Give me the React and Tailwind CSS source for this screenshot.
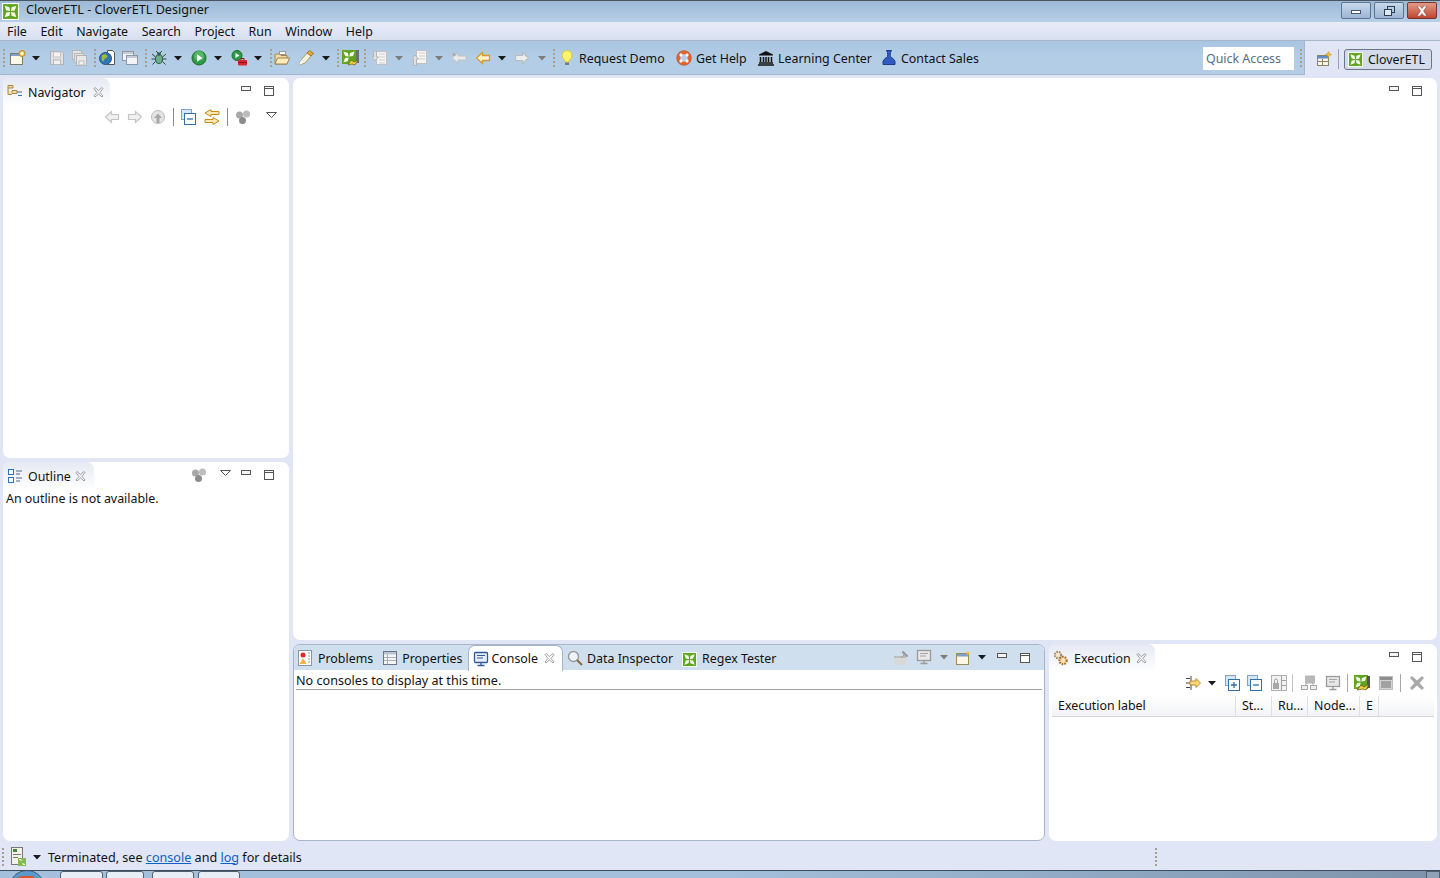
const Caret = ({ dark }) => (
  <svg width="8" height="5" viewBox="0 0 8 5" className="shrink-0"><path d="M0 0h8L4 4.5z" fill={dark ? '#1a1a1a' : '#7c7c7c'} /></svg>
)

const Grip = ({ count = 5 }) => (
  <div className="flex flex-col justify-center gap-[2px] w-[3px] shrink-0">
    {Array.from({ length: count }).map((_, i) => <div key={i} className="w-[2px] h-[2px] bg-[#a8a08c]" />)}
  </div>
)

const Clover = ({ size = 16 }) => (
  <svg width={size} height={size} viewBox="0 0 16 16" className="shrink-0">
    <rect width="16" height="16" fill="#fff" />
    <rect x="1" y="1" width="14" height="14" fill="#5fa51f" />
    <path d="M2.5 2.5L7 4l.6 3.600L4 7zM13.500 2.500L12 7l-3.600.6L9 4zM2.500 13.500L4 9l3.600-.6L7 12zM13.500 13.500L9 12l-.6-3.600L12 9z" fill="#f4f9ea" />
  </svg>
)

const S = ({ children }) => (
  <svg width="16" height="16" viewBox="0 0 16 16" fill="none" className="shrink-0">{children}</svg>
)

const icons = {
  newFile: <S><rect x="0.500" y="3.500" width="12" height="11" fill="#fdf8e6" stroke="#7c7a60" /><rect x="1" y="4" width="11" height="2" fill="#7f9fd0" /><circle cx="12" cy="3.500" r="3" fill="#f4d060" stroke="#b88a20" /><path d="M10.500 3.500h3M12 2v3" stroke="#fff" /></S>,
  save: <S><path d="M1.500 1.500h11l2 2v11h-13z" fill="#e0e0e0" stroke="#b0b0b0" /><rect x="4.500" y="2" width="7" height="5" fill="#f4f4f4" stroke="#c4c4c4" /><rect x="4.500" y="10" width="7" height="4.500" fill="#f0f0f0" stroke="#b8b8b8" /></S>,
  saveAll: <S><rect x="1.500" y="0.500" width="9" height="9" fill="#e4e4e4" stroke="#b8b8b8" /><rect x="3.500" y="3.500" width="9" height="9" fill="#e4e4e4" stroke="#b8b8b8" /><rect x="5.500" y="5.500" width="10" height="10" fill="#e8e8e8" stroke="#b4b4b4" /><rect x="8" y="11" width="5" height="4" fill="#f4f4f4" stroke="#bbb" /></S>,
  globe: <S><path d="M8.500 0.500h5l2 2v12h-7z" fill="#fff" stroke="#555" /><circle cx="6.500" cy="8.500" r="6" fill="#2f78b8" stroke="#24507c" /><path d="M3 5.500c2-2 4-1 5 0s-1 3-2 3-1 3-2 3-2-4-1-6z" fill="#a4b83a" /></S>,
  windows: <S><rect x="0.500" y="1.500" width="11" height="9" fill="#f2f4f8" stroke="#8d97a6" /><rect x="1" y="2" width="10" height="2" fill="#c4ccd8" /><rect x="4.500" y="5.500" width="11" height="9" fill="#f2f4f8" stroke="#8d97a6" /><rect x="5" y="6" width="10" height="2" fill="#c4ccd8" /></S>,
  bug: <S><ellipse cx="8" cy="9" rx="3.500" ry="4.500" fill="#6fae8c" stroke="#2e5a48" /><circle cx="8" cy="4" r="1.800" fill="#2e5a48" /><path d="M1 4l3.500 3M15 4l-3.500 3M0.500 9h4M15.500 9h-4M1.500 14.500l3-3M14.500 14.500l-3-3M5 1l2 2M11 1L9 3" stroke="#2e4a40" /></S>,
  run: <S><circle cx="8" cy="8" r="7" fill="#2d9a45" stroke="#1b6b2f" /><circle cx="8" cy="6" r="5" fill="#53b865" /><path d="M6 4.200l5.500 3.800-5.500 3.800z" fill="#fff" /></S>,
  ext: <S><circle cx="6" cy="5.500" r="5" fill="#2d9a45" stroke="#1b6b2f" /><path d="M4.500 3l4 2.500-4 2.500z" fill="#fff" /><rect x="7" y="10" width="9" height="5.500" rx="1" fill="#d8262c" /><path d="M10 10V8.500h3V10M7 12.500h9" stroke="#8c1216" /></S>,
  open: <S><path d="M1 4.500V14h12V5.500H7L6 4H1.500z" fill="#f4dca0" stroke="#a0824a" /><path d="M1 14l2.500-6h12L13 14z" fill="#fcecc0" stroke="#a0824a" /><rect x="5.500" y="1.500" width="6" height="3" fill="#fff" stroke="#9a9a9a" /></S>,
  pen: <S><path d="M1 15l2-5 7-8 4 3-7 8z" fill="#f8f2dc" stroke="#a89a70" /><path d="M9 3l2.500-2.500 4 3L13 6z" fill="#e4a83c" stroke="#a87820" /><path d="M1 15l2-5 3 2.500z" fill="#fff" /></S>,
  graph: <svg width="18" height="17" viewBox="0 0 18 17" className="shrink-0"><rect width="14" height="14" fill="#5fa51f" /><path d="M1.500 1.500L6 3l.6 3.600L3 6zM12.500 1.500L11 6l-3.600.6L8 3zM1.500 12.500L3 8l3.600-.6L6 11z" fill="#f4f9ea" /><rect x="14" y="0" width="3" height="13" fill="#6e6e6e" /><path d="M6 15l3-5 3 2 4-2-3 5-3-1z" fill="#f2d040" stroke="#6e5c10" strokeWidth=".7" /></svg>,
  imp: <S><rect x="4.500" y="1.500" width="10" height="13" fill="#f4f4f4" stroke="#c0c0c0" /><path d="M7 4h6M7 7h6M7 10h6M7 13h6" stroke="#cfcfcf" /><path d="M1.500 1h3v6h2L3 11-.5 7h2z" fill="#e0e0e0" stroke="#b4b4b4" /></S>,
  exp: <S><rect x="4.500" y="0.500" width="10" height="13" fill="#f4f4f4" stroke="#c0c0c0" /><path d="M7 3h6M7 6h6M7 9h6" stroke="#cfcfcf" /><path d="M1.500 15.500h3V9h2L3 5-.5 9h2z" fill="#e0e0e0" stroke="#b4b4b4" /></S>,
  backDim: <S><path d="M1 8l6-5v3h8v4H7v3z" fill="#e8eaea" stroke="#c0c4c4" /><circle cx="3" cy="4.500" r="1.500" fill="#aaa" /></S>,
  back: <S><path d="M1.500 8l6-5.500v3h7v5h-7v3z" fill="#fdf3cf" stroke="#d99a26" strokeWidth="1.300" /></S>,
  fwd: <S><path d="M14.500 8l-6-5.500v3h-7v5h7v3z" fill="#eceeee" stroke="#b8bcbc" strokeWidth="1.200" /></S>,
  bulb: <S><path d="M8 0.500a5 5 0 0 0-3 9c.7.6 1 1.500 1 2.500h4c0-1 .3-1.900 1-2.500a5 5 0 0 0-3-9z" fill="#fdf46c" stroke="#d8c840" /><rect x="6" y="12.500" width="4" height="2.500" fill="#7a7a7a" /></S>,
  ring: <S><circle cx="8" cy="8" r="5.500" stroke="#e8622c" strokeWidth="3.500" /><path d="M4 4l2 2M12 4l-2 2M4 12l2-2M12 12l-2-2" stroke="#fff" strokeWidth="2.500" /><circle cx="8" cy="8" r="7.400" stroke="#a05030" strokeWidth=".6" /></S>,
  bank: <S><path d="M8 1l7 3.500v1H1v-1z" fill="#111" /><path d="M2.500 7v5M5.500 7v5M8 7v5M10.500 7v5M13.500 7v5" stroke="#111" strokeWidth="1.500" /><path d="M1 13h14M0 15h16" stroke="#111" strokeWidth="1.500" /></S>,
  person: <S><path d="M5.500 0.500h5l-1 2c0 1.500-.5 3 0 4s4 2.500 4.500 5v3H2v-3c.5-2.500 4-4 4.500-5s0-2.500 0-4z" fill="#2f5cc0" stroke="#1b3a8a" /></S>,
  perspective: <S><rect x="1.500" y="4.500" width="11" height="10" fill="#f8f4e4" stroke="#8a8466" /><rect x="2" y="5" width="10" height="2.500" fill="#5f8fc8" /><path d="M6.500 7.500v7M1.500 10.500h11" stroke="#8a8466" /><path d="M12.500 0.500l1 2 2 1-2 1-1 2-1-2-2-1 2-1z" fill="#f4c430" stroke="#b08a20" strokeWidth=".5" /></S>,
  nav: <S><path d="M1 1.500h5v2.500H1zM1 4v6.500h4M5 6.500h5v3H5z" fill="#f4dca0" stroke="#a58a4a" /><path d="M10 8h5M11 11.500h4" stroke="#3b6aa8" /></S>,
  outline: <S><rect x="1.500" y="1.500" width="5" height="5" fill="#fff" stroke="#2f6fc0" /><rect x="1.500" y="9.500" width="5" height="5" fill="#fff" stroke="#2f6fc0" /><path d="M9 3h6M9 6h4M9 10h6M9 13h4" stroke="#4a6a90" /></S>,
  problems: <S><rect x="1.500" y="0.500" width="13" height="15" fill="#fff" stroke="#8a94a6" /><circle cx="6" cy="5" r="2.500" fill="#e02a20" /><path d="M6 8l3.500 6h-7z" fill="#f2b43c" /><path d="M11 3h2M11 6h2M11 9h2M11 12h2" stroke="#8a94a6" /></S>,
  props: <S><rect x="0.500" y="1.500" width="13" height="13" fill="#f6f6f4" stroke="#6c7488" /><rect x="1" y="2" width="12" height="2.500" fill="#b8c4d8" /><path d="M4.500 4.500v10M1 7.500h12M1 10.500h12" stroke="#a8aebc" /></S>,
  console: <S><rect x="1.500" y="1.500" width="13" height="10" rx="1" fill="#e8eef8" stroke="#2c5a96" strokeWidth="1.300" /><path d="M4 4.500h8M4 7h6" stroke="#2c5a96" /><path d="M4.500 14.500h7M8 12v2" stroke="#2c5a96" strokeWidth="1.300" /></S>,
  search: <S><circle cx="6.500" cy="6.500" r="5" fill="#eef4fa" stroke="#9a9a9a" strokeWidth="1.400" /><path d="M10 10l5 5" stroke="#8a6a3c" strokeWidth="2" /></S>,
  gear: <S><circle cx="5" cy="5" r="3.200" fill="#f2e8d0" stroke="#a08860" strokeWidth="2" strokeDasharray="1.600 1" /><circle cx="10" cy="10.500" r="3.600" fill="#fbe6b0" stroke="#a8702c" strokeWidth="2.200" strokeDasharray="1.600 1" /></S>,
  pin: <S><rect x="1" y="6" width="12" height="9" fill="#d8d8d8" /><rect x="1" y="6" width="12" height="2" fill="#bcbcbc" /><path d="M8 8l4-4M10 1l5 5-2 .5-3.500-3.500z" fill="#9c9c9c" stroke="#9c9c9c" /></S>,
  monitor: <S><rect x="1.500" y="1.500" width="13" height="10" fill="#e8e8e8" stroke="#9a9a9a" strokeWidth="1.300" /><path d="M4 4.500h8M4 7h6" stroke="#a4a4a4" /><path d="M4.500 14.500h7M8 12v2" stroke="#9a9a9a" strokeWidth="1.300" /></S>,
  newCons: <S><rect x="1.500" y="3.500" width="12" height="11" fill="#fdf8e6" stroke="#9a8a56" /><rect x="2" y="4" width="11" height="2.500" fill="#7f9fd0" /><path d="M13 0.500l.8 1.700 1.700.8-1.700.8-.8 1.700-.8-1.700-1.700-.8 1.700-.8z" fill="#f4c430" /></S>,
  pinSel: <S><path d="M1 3.500h4M1 12.500h4M1 8h8" stroke="#444" /><path d="M6 1v5M6 10v5" stroke="#444" /><path d="M5 6h6V3.500L15.500 8 11 12.500V10H5z" fill="#f8d880" stroke="#c08a20" /></S>,
  expand: <S><rect x="0.500" y="0.500" width="10" height="10" fill="#d8e6f4" stroke="#7ea2c8" /><rect x="3.500" y="4.500" width="11" height="11" fill="#fff" stroke="#2f6fa8" /><path d="M6 10h6M9 7v6" stroke="#2f6fa8" strokeWidth="1.300" /></S>,
  collapse: <S><rect x="0.500" y="0.500" width="10" height="10" fill="#d8e6f4" stroke="#7ea2c8" /><rect x="3.500" y="4.500" width="11" height="11" fill="#fff" stroke="#2f6fa8" /><path d="M6 10h6" stroke="#2f6fa8" strokeWidth="1.300" /></S>,
  lockGrid: <S><rect x="0.500" y="0.500" width="15" height="15" fill="#f2f2f2" stroke="#b0b0b0" /><path d="M10.500 1v14M11 5.500h4M11 10.500h4" stroke="#a0a0a0" /><rect x="2" y="8" width="6" height="6" fill="#a8a8a8" /><path d="M3.500 8V5.500a1.500 1.500 0 0 1 3 0V8" stroke="#a0a0a0" /></S>,
  nodes: <S><rect x="4" y="0.500" width="10" height="8" fill="#b8b8b8" /><rect x="0.500" y="10.500" width="6" height="4" fill="#eee" stroke="#a8a8a8" /><rect x="9.500" y="10.500" width="6" height="4" fill="#eee" stroke="#a8a8a8" /><path d="M6 8l-2 2.500M11 8l2 2.500" stroke="#a8a8a8" /></S>,
  graphRun: <svg width="17" height="17" viewBox="0 0 17 17" className="shrink-0"><rect width="14" height="14" fill="#5fa51f" /><path d="M1.500 1.500L6 3l.6 3.600L3 6zM12.500 1.500L11 6l-3.600.6L8 3zM1.500 12.500L3 8l3.600-.6L6 11z" fill="#f4f9ea" /><rect x="13" y="1" width="3" height="12" fill="#555" /><path d="M3 15l4-5 3 2 5-3-3 6-3-1z" fill="#f2d040" stroke="#5e4c10" strokeWidth=".7" /></svg>,
  stop: <S><rect x="1.500" y="1.500" width="13" height="13" fill="#d4d4d4" stroke="#bcbcbc" /><rect x="2" y="2" width="12" height="3" fill="#8e8e8e" /><rect x="3" y="6" width="10" height="7" fill="#a2a2a2" /></S>,
  remove: <S><path d="M3 1l5 4.500L13 1l2 2-4.500 5 4.500 5-2 2-5-4.500L3 15l-2-2 4.500-5L1 3z" fill="#a8a8a8" /></S>,
  backNav: <S><path d="M1.500 8l6-5.500v3h7v5h-7v3z" fill="#f0f0f0" stroke="#c4c4c4" strokeWidth="1.200" /></S>,
  fwdNav: <S><path d="M14.500 8l-6-5.500v3h-7v5h7v3z" fill="#f0f0f0" stroke="#c4c4c4" strokeWidth="1.200" /></S>,
  upNav: <S><circle cx="8" cy="8" r="6.500" fill="#e4e4e4" stroke="#bcbcbc" /><path d="M8 4.500L12 9H9.500v5h-3V9H4z" fill="#a8a8a8" /></S>,
  linkEd: <S><path d="M7 0.500L1 4l6 3.500V5.500h8v-3H7z" fill="#fce9b4" stroke="#c98a1c" /><path d="M9 8.500l6 3.500-6 3.500v-2H1v-3h8z" fill="#fce9b4" stroke="#c98a1c" /></S>,
  focus: <S><circle cx="4.500" cy="6" r="3.500" fill="#a8a8a8" /><circle cx="11.500" cy="5" r="3.500" fill="#bcbcbc" /><circle cx="7.500" cy="11.500" r="3.500" fill="#8c8c8c" /></S>,
  statusJob: <svg width="16" height="20" viewBox="0 0 16 20" className="shrink-0"><rect x="0.500" y="0.500" width="11" height="17" fill="#f2f2ea" stroke="#777" /><rect x="2" y="2" width="4" height="3" fill="#3f8a3f" /><path d="M2 7.500h8M2 10.500h5" stroke="#777" /><rect x="7" y="11" width="8" height="8" fill="#82bd4a" /><path d="M8 12h2l1 2-3-1zM14 18h-2l-1-2 3 1z" fill="#fff" /></svg>,
}

const MinBtn = () => <div className="w-[10px] h-[5px] border border-[#555] bg-[#f4f4f4]" />
const MaxBtn = () => (
  <div className="w-[10px] h-[10px] border border-[#555] bg-white">
    <div className="h-[2px] border-b border-[#555]" />
  </div>
)

const Close = () => (
  <svg width="11" height="11" viewBox="0 0 11 11" fill="none" className="shrink-0"><path d="M1 1.500L2 .5l3.500 3L9 .5l1 1-3 4 3 3.500-1 1-3.500-3L2 10l-1-1 3-3.500z" stroke="#8a8a8a" strokeWidth=".8" /></svg>
)

const ViewControls = () => (
  <div className="flex items-start gap-[13px] pt-[8px]">
    <MinBtn />
    <MaxBtn />
  </div>
)

const Chevron = ({ className }) => (
  <svg width="11" height="6" viewBox="0 0 11 6" fill="none" className={className}><path d="M.5.500h10L5.500 5.500z" fill="#fff" stroke="#555" /></svg>
)

// [icon, slot width]; slots add up to the reference's toolbar positions
const toolbarItems = [
  ['g', 7], ['newFile', 22], ['c', 17], ['save', 22], ['saveAll', 23], ['g', 5],
  ['globe', 23], ['windows', 23], ['g', 6], ['bug', 23], ['c', 17], ['run', 23], ['c', 17], ['ext', 23], ['c', 16],
  ['g', 4], ['open', 24], ['pen', 24], ['c', 15], ['g', 5], ['graph', 22], ['g', 8], ['imp', 23], ['cg', 17], ['exp', 23], ['cg', 16],
  ['backDim', 24], ['back', 23], ['c', 16], ['fwd', 24], ['cg', 15], ['g', 6],
]

const links = [
  ['bulb', 'Request Demo', 'w-[117px]'],
  ['ring', 'Get Help', 'w-[82px]'],
  ['bank', 'Learning Center', 'w-[123px]'],
  ['person', 'Contact Sales', 'w-[100px]'],
]

const Tab = ({ icon, label, active, close, className = '', h = 'h-[26px]', gap = 'gap-[5px]', closeGap = 'ml-[2px]' }) => (
  <div className={`flex items-center ${h} ${gap} ${active ? 'bg-white rounded-t-[7px]' : ''} ${className}`}>
    {icons[icon]}
    <span className="whitespace-nowrap pt-[2px]">{label}</span>
    {close && <span className={closeGap}><Close /></span>}
  </div>
)

const viewTab = 'bg-gradient-to-b from-[#e6e9f3] to-white rounded-t-[7px]'

function App() {
  return (
    <div className="w-[1440px] h-[878px] flex flex-col overflow-hidden bg-[#e0e6f6] text-[12.4px] text-[#111] font-['Noto_Sans','DejaVu_Sans',sans-serif] leading-none">
      {/* title bar */}
      <div className="h-[22px] shrink-0 border-t border-[#4a5560] bg-gradient-to-b from-[#9db9d6] to-[#b7cfe7] flex items-center pl-[2px] pr-[3px]">
        <Clover size={17} />
        <span className="ml-[7px] flex-1 text-[12.6px] pb-[3px]">CloverETL - CloverETL Designer</span>
        <div className="flex gap-[3px] self-start mt-[1px]">
          <div className="w-[30px] h-[17px] rounded-[2px] border border-[#5c7391] bg-gradient-to-b from-[#c8d8ea] to-[#9bb6d4] flex items-center justify-center"><div className="w-[10px] h-[4px] bg-white border border-[#44566c] mt-[3px]" /></div>
          <div className="w-[30px] h-[17px] rounded-[2px] border border-[#5c7391] bg-gradient-to-b from-[#c8d8ea] to-[#9bb6d4] flex items-center justify-center">
            <svg width="12" height="11" viewBox="0 0 12 11" fill="none"><rect x="4.500" y="1.500" width="7" height="6" stroke="#2e3e50" /><rect x="1.500" y="4.500" width="7" height="6" fill="#dfe8f2" stroke="#2e3e50" /></svg>
          </div>
          <div className="w-[30px] h-[17px] rounded-[2px] border border-[#7a3328] bg-gradient-to-b from-[#e09a88] to-[#bf4430] flex items-center justify-center">
            <svg width="12" height="10" viewBox="0 0 12 10"><path d="M1 0h3l2 2.500L8 0h3L7.500 5 11 10H8L6 7.500 4 10H1l3.500-5z" fill="#fff" stroke="#6e3028" strokeWidth=".5" /></svg>
          </div>
        </div>
      </div>

      {/* menu bar */}
      <div className="h-[19px] shrink-0 bg-gradient-to-b from-[#e8ecf8] to-[#d8e0f0] border-b border-[#a8b4c8] flex items-center pl-[7px] pt-[2px] gap-[13.6px]">
        {['File', 'Edit', 'Navigate', 'Search', 'Project', 'Run', 'Window', 'Help'].map((m) => <span key={m}>{m}</span>)}
      </div>

      {/* toolbar */}
      <div className="h-[34px] shrink-0 flex">
        <div className="w-[1305px] h-[34px] bg-gradient-to-b from-[#a9c5e1] via-[#b4cde6] to-[#b4cde6] border-b border-r border-[#a4b6cc] flex items-center pl-[3px] pt-[1px]">
          {toolbarItems.map(([k, w], i) => (
            <div key={i} className="flex items-center shrink-0 h-full" style={{ width: w }}>
              {k === 'g' ? <Grip /> : k === 'c' ? <Caret dark /> : k === 'cg' ? <Caret /> : icons[k]}
            </div>
          ))}
          {links.map(([k, t, w]) => (
            <div key={t} className={`flex items-center shrink-0 ${w}`}>
              <span className="w-[20px] shrink-0">{icons[k]}</span>
              <span className="whitespace-nowrap pt-[2px]">{t}</span>
            </div>
          ))}
          <div className="ml-auto mr-[6px] w-[91px] h-[23px] bg-white text-[#5a6a80] flex items-center pl-[3px] pt-[2px]">Quick Access</div>
          <div className="mr-[1px]"><Grip /></div>
        </div>
        <div className="flex-1 flex items-center h-[34px] pl-[11px] pt-[2px]">
          {icons.perspective}
          <div className="w-px h-[20px] bg-[#9aa4b4] ml-[6px] mr-[5px]" />
          <div className="w-[88px] h-[21px] rounded-[3px] border border-[#6b7686] bg-[#d4dbea] flex items-center pl-[3px] gap-[5px]">
            <Clover size={15} />
            <span className="pt-[3px]">CloverETL</span>
          </div>
        </div>
      </div>

      {/* workspace */}
      <div className="h-[766px] shrink-0 flex gap-[4px] pl-[3px] pr-[3px] pt-[3px]">
        <div className="w-[286px] flex flex-col gap-[4px]">
          <div className="h-[380px] bg-white rounded-[7px] flex flex-col">
            <div className="flex justify-between pr-[15px] h-[27px]">
              <Tab icon="nav" label="Navigator" close h="h-[28px]" className={`pl-[4px] pr-[6px] ${viewTab}`} />
              <ViewControls />
            </div>
            <div className="flex items-center h-[24px] pl-[101px]">
              <span className="mr-[7px]">{icons.backNav}</span>
              <span className="mr-[7px]">{icons.fwdNav}</span>
              {icons.upNav}
              <div className="w-px h-[18px] bg-[#8a8a8a] mx-[7px]" />
              <span className="mr-[7px]">{icons.collapse}</span>
              {icons.linkEd}
              <div className="w-px h-[18px] bg-[#8a8a8a] mx-[7px]" />
              {icons.focus}
              <Chevron className="ml-[15px] mb-[4px]" />
            </div>
          </div>
          <div className="h-[379px] bg-white rounded-[7px] flex flex-col">
            <div className="flex items-start pr-[15px] h-[27px]">
              <Tab icon="outline" label="Outline" close closeGap="-ml-[1px]" h="h-[28px]" className={`pl-[4px] pr-[8px] ${viewTab}`} />
              <div className="ml-auto flex items-start">
                <span className="mt-[5px] mr-[13px]">{icons.focus}</span>
                <Chevron className="mt-[8px] mr-[10px]" />
                <ViewControls />
              </div>
            </div>
            <div className="pl-[3px] pt-[4px]">An outline is not available.</div>
          </div>
        </div>

        <div className="flex-1 flex flex-col gap-[4px]">
          <div className="h-[562px] bg-white rounded-[7px] flex justify-end pr-[15px]">
            <ViewControls />
          </div>
          <div className="h-[197px] flex gap-[4px]">
            {/* console stack */}
            <div className="w-[752px] bg-white rounded-[7px] border border-[#a8b4c8] flex flex-col overflow-hidden">
              <div className="h-[25px] shrink-0 bg-[#cfdfee] flex items-start">
                <div className="flex items-center pl-[3px]">
                  <Tab icon="problems" label="Problems" className="mr-[10px]" />
                  <Tab icon="props" label="Properties" gap="gap-[3px]" className="mr-[6px]" />
                  <Tab icon="console" label="Console" active close closeGap="ml-[4px]" gap="gap-[2px]" className="pl-[4px] pr-[7px] mr-[4px] border-t border-x border-[#a8b4c8]" />
                  <Tab icon="search" label="Data Inspector" gap="gap-[4px]" className="mr-[9px]" />
                  <Tab icon="" label={<span className="flex items-center gap-[5px]"><Clover size={15} /><span>Regex Tester</span></span>} />
                </div>
                <div className="ml-auto flex items-start pr-[14px]">
                  <span className="mt-[5px] mr-[7px]">{icons.pin}</span>
                  <span className="mt-[4px] mr-[8px]">{icons.monitor}</span>
                  <span className="mt-[10px] mr-[7px] flex"><Caret /></span>
                  <span className="mt-[5px] mr-[7px]">{icons.newCons}</span>
                  <span className="mt-[10px] mr-[11px] flex"><Caret dark /></span>
                  <ViewControls />
                </div>
              </div>
              <div className="h-[20px] mx-[2px] border-b border-[#a0a0a0] flex items-center pt-[3px] text-[12.6px]">No consoles to display at this time.</div>
            </div>

            {/* execution */}
            <div className="flex-1 bg-white rounded-[7px] flex flex-col">
              <div className="flex justify-between pr-[15px] h-[26px] shrink-0">
                <Tab icon="gear" label="Execution" close closeGap="ml-0" h="h-[28px]" className={`pl-[4px] pr-[8px] ${viewTab}`} />
                <ViewControls />
              </div>
              <div className="flex items-center justify-end h-[26px] pr-[12px]">
                {icons.pinSel}
                <span className="ml-[7px] mr-[9px] flex"><Caret dark /></span>
                {icons.expand}
                <span className="ml-[6px] mr-[8px]">{icons.collapse}</span>
                {icons.lockGrid}
                <div className="w-px h-[18px] bg-[#c4c4c4] mx-[5px]" />
                <span className="ml-[3px] mr-[8px]">{icons.nodes}</span>
                {icons.monitor}
                <div className="w-px h-[18px] bg-[#a8a8a8] mx-[6px]" />
                {icons.graphRun}
                <span className="ml-[7px]">{icons.stop}</span>
                <div className="w-px h-[18px] bg-[#a8a8a8] mx-[6px]" />
                <span className="ml-[2px]">{icons.remove}</span>
              </div>
              <div className="mx-[3px] h-[21px] flex items-center bg-gradient-to-b from-white to-[#f2f3f5] border-b border-[#d8d8d8]">
                <div className="w-[184px] h-full flex items-center pl-[6px] border-r border-[#e0e0e0]">Execution label</div>
                <div className="w-[36px] h-full flex items-center pl-[6px] border-r border-[#e0e0e0]">St...</div>
                <div className="w-[36px] h-full flex items-center pl-[6px] border-r border-[#e0e0e0]">Ru...</div>
                <div className="w-[52px] h-full flex items-center pl-[6px] border-r border-[#e0e0e0] whitespace-nowrap">Node...</div>
                <div className="w-[19px] h-full flex items-center pl-[6px] border-r border-[#e0e0e0]">E</div>
              </div>
            </div>
          </div>
        </div>
      </div>

      {/* status bar */}
      <div className="h-[29px] shrink-0 flex items-center pl-[2px] pt-[3px]">
        <Grip />
        <span className="ml-[6px]">{icons.statusJob}</span>
        <span className="ml-[6px] mr-[7px] flex"><Caret dark /></span>
        <span className="text-[12.6px] pt-[2px]">
          Terminated, see <span className="text-[#0f5fc4] underline">console</span> and <span className="text-[#0f5fc4] underline">log</span> for details
        </span>
        <div className="ml-auto mr-[282px]"><Grip /></div>
      </div>

      {/* taskbar peeking at the bottom */}
      <div className="h-[8px] shrink-0 border-t border-[#3e4c5c] bg-gradient-to-r from-[#a4bfdc] via-[#a4bfdc] to-[#7e93ab] flex overflow-hidden relative">
        <div className="absolute left-[9px] top-[-1px] w-[36px] h-[36px] rounded-full border border-[#3e5a78] bg-[#5a9acc] overflow-hidden">
          <div className="w-[18px] h-[18px] ml-[6px] mt-[5px] bg-[#d9552c] rounded-tl-[6px]" />
        </div>
        <div className="ml-[60px] flex">
          <div className="w-[43px] h-[8px] rounded-t-[3px] border border-[#4f5f70] bg-[#e8eef6] mr-[3px]" />
          <div className="w-[38px] h-[8px] rounded-t-[3px] border border-[#4f5f70] bg-[#e8eef6] mr-[8px]" />
          <div className="w-[42px] h-[8px] rounded-t-[3px] border border-[#4f5f70] bg-[#e8eef6] mr-[4px]" />
          <div className="w-[42px] h-[8px] rounded-t-[3px] border border-[#4f5f70] bg-[#e8eef6]" />
        </div>
        <div className="ml-auto w-[14px] h-[8px] border border-[#4f5f70] bg-[#8ea2b8]" />
      </div>
    </div>
  )
}

export default App
